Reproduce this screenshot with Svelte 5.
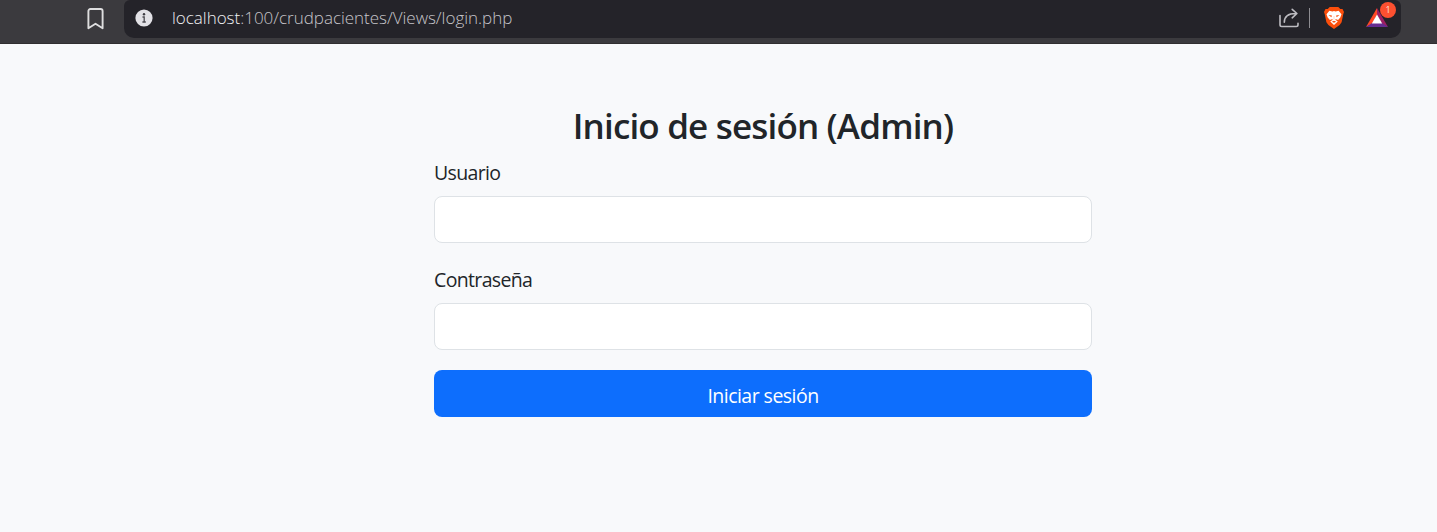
<script>
  let user = $state('');
  let password = $state('');
</script>

<div class="page">
  <header class="toolbar">
    <svg class="bookmark" width="17" height="22" viewBox="0 0 17 22" fill="none">
      <path d="M1.4 3a2 2 0 0 1 2-2h10.2a2 2 0 0 1 2 2v17.2l-7.1-4.4-7.1 4.4z" stroke="#dededf" stroke-width="1.9" stroke-linejoin="round" />
    </svg>
    <div class="address">
      <svg class="info" width="18" height="18" viewBox="0 0 18 18">
        <circle cx="9" cy="9" r="8.6" fill="#e2e1e6" />
        <circle cx="9" cy="5.2" r="1.2" fill="#3b3a40" />
        <path d="M7.5 8h1.7v5M7.4 13h3.4" fill="none" stroke="#4b4a50" stroke-width="1.3" />
      </svg>
      <span class="url"><span class="host">localhost</span>:100/crudpacientes/Views/login.php</span>
      <svg class="share" width="22" height="20" viewBox="0 0 22 20" fill="none" stroke="#bdbcc1" stroke-width="1.6" stroke-linecap="round" stroke-linejoin="round">
        <path d="M2 7.5v9.3a1.7 1.7 0 0 0 1.7 1.7h14.6a1.7 1.7 0 0 0 1.7-1.7v-1.6" />
        <path d="M6.3 14.3c0-5.6 3.2-8.8 11.5-8.8M14.2 1.3l4.7 4.2-4.7 4.3" />
      </svg>
      <span class="divider"></span>
      <svg class="lion" width="22" height="24" viewBox="0 0 22 24">
        <path d="M6.7 1h8.6l2 2.1 2.2-.1 1.5 3-.7 2-1.7 8.2-2 2.7L11 23l-5.6-4.1-2-2.7L1.7 8 1 6l1.5-3 2.2.1z" fill="#fb4e0b" />
        <path d="M6.4 4.8l3 .6L11 5l1.6.4 3-.6 2.9 3.5-1.2 3.3-2.2 2.4-2.7-1 .2 1.1 2.2 1.5-3.8 3.5-3.8-3.5 2.2-1.5.2-1.1-2.7 1-2.2-2.4-1.2-3.3z" fill="#fff" />
        <path d="M5.5 9l3.4.6-.5 1.6zM16.5 9l-3.4.6.5 1.6zM8.8 15.8L11 14.7l2.2 1.1-2.2 1z" fill="#fb4e0b" />
        <path d="M11 10v3.5" stroke="#ffc7b0" stroke-width=".7" />
      </svg>
      <span class="rewards">
        <svg width="24" height="22" viewBox="0 0 24 22">
          <path d="M12 1L1 20l6-3 5-9z" fill="#ff4724" />
          <path d="M12 1l11 19-6-3-5-9z" fill="#9e1f63" />
          <path d="M1 20h22l-6-4H7z" fill="#662d91" />
          <path d="M12 7.5l5.2 9H6.8z" fill="#fff" />
        </svg>
        <span class="badge">1</span>
      </span>
    </div>
  </header>

  <main>
    <form onsubmit={(e) => e.preventDefault()}>
      <h1>Inicio de sesión (Admin)</h1>
      <label for="user">Usuario</label>
      <input id="user" type="text" bind:value={user} />
      <label for="password">Contraseña</label>
      <input id="password" type="password" bind:value={password} />
      <button type="submit">Iniciar sesión</button>
    </form>
  </main>
</div>

<style>
  :global(body) { background: #f8f9fb; }
  .page {
    height: 532px;
    overflow: hidden;
    background: #f8f9fb;
    color: #212529;
    font-family: "Open Sans", "Noto Sans", sans-serif;
  }
  .toolbar {
    display: flex;
    align-items: flex-start;
    box-sizing: border-box;
    height: 44px;
    padding-left: 87px;
    background: #3b3a3e;
    border-bottom: 1px solid #302e30;
  }
  .bookmark { margin: 8px 20px 0 0; flex: none; }
  .address {
    display: flex;
    align-items: center;
    box-sizing: border-box;
    width: 1277px;
    height: 38px;
    padding: 0 12px 2px 11px;
    border-radius: 6px 6px 10px 10px;
    background: #242329;
  }
  svg { display: block; flex: none; }
  .url {
    margin-left: 19px;
    font-size: 17px;
    font-weight: 300;
    line-height: 24px;
    letter-spacing: -0.02px;
    white-space: nowrap;
    color: #c6c5ca;
  }
  .host { color: #f1f1f3; letter-spacing: -0.02px; }
  .share { margin-left: auto; }
  .divider { width: 1px; height: 20px; margin: 0 13px 0 9px; background: #8d8c91; }
  .rewards { position: relative; margin-left: 20px; }
  .badge {
    position: absolute;
    left: 15px;
    top: -5px;
    width: 16px;
    height: 16px;
    border-radius: 50%;
    background: #fd5030;
    color: #ffe3dc;
    font-size: 9px;
    line-height: 16px;
    text-align: center;
  }
  form { display: flex; flex-direction: column; width: 658px; margin: 0 0 0 434px; padding-top: 60px; }
  h1 {
    margin: 0 0 10px;
    font-size: 35px;
    font-weight: 600;
    line-height: 44px;
    letter-spacing: -0.83px;
    text-align: center;
    white-space: nowrap;
  }
  label {
    height: 30px;
    margin-bottom: 8px;
    font-size: 19.5px;
    line-height: 30px;
    letter-spacing: -0.65px;
  }
  input {
    box-sizing: border-box;
    width: 100%;
    height: 47px;
    margin: 0 0 22px;
    padding: 7px 15px;
    border: 1px solid #dee2e6;
    border-radius: 8px;
    background: #fff;
    font: inherit;
    outline: none;
  }
  #password { margin-bottom: 20px; }
  button {
    height: 47px;
    padding: 4px 0 0;
    border: 0;
    border-radius: 8px;
    background: #0d6efd;
    color: #fff;
    font: 19.5px "Open Sans", "Noto Sans", sans-serif;
    letter-spacing: -0.53px;
  }
</style>
